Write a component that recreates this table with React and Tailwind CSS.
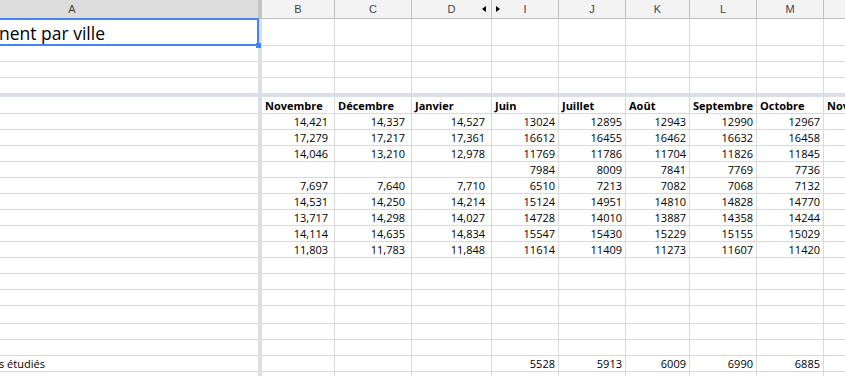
import React from "react";

const cols = [
  { k: "B", w: "w-[73px]", pr: "pr-[6px]" },
  { k: "C", w: "w-[77px]", pr: "pr-[6px]" },
  { k: "D", w: "w-[80px]", pr: "pr-[6px]" },
  { k: "I", w: "w-[67px]", pr: "pr-[3px]" },
  { k: "J", w: "w-[67px]", pr: "pr-[3px]" },
  { k: "K", w: "w-[64px]", pr: "pr-[3px]" },
  { k: "L", w: "w-[67px]", pr: "pr-[3px]" },
  { k: "M", w: "w-[67px]", pr: "pr-[3px]" },
  { k: "N", w: "w-[80px]", pr: "pr-[3px]" },
];

const months = ["Novembre", "Décembre", "Janvier", "Juin", "Juillet", "Août", "Septembre", "Octobre", "Novembre"];

const data = [
  ["14,421", "14,337", "14,527", "13024", "12895", "12943", "12990", "12967"],
  ["17,279", "17,217", "17,361", "16612", "16455", "16462", "16632", "16458"],
  ["14,046", "13,210", "12,978", "11769", "11786", "11704", "11826", "11845"],
  ["", "", "", "7984", "8009", "7841", "7769", "7736"],
  ["7,697", "7,640", "7,710", "6510", "7213", "7082", "7068", "7132"],
  ["14,531", "14,250", "14,214", "15124", "14951", "14810", "14828", "14770"],
  ["13,717", "14,298", "14,027", "14728", "14010", "13887", "14358", "14244"],
  ["14,114", "14,635", "14,834", "15547", "15430", "15229", "15155", "15029"],
  ["11,803", "11,783", "11,848", "11614", "11409", "11273", "11607", "11420"],
];

const blank = [];

// bottom pane rows: [height class, label in A, values]
const bottomRows = [
  ...data.map((d) => ["h-[16px]", "", d]),
  ["h-[16px]", "", blank],
  ["h-[16px]", "", blank],
  ["h-[16px]", "", blank],
  ["h-[18px]", "", blank],
  ["h-[16px]", "", blank],
  ["h-[16px]", "", blank],
  ["h-[16px]", "s étudiés", ["", "", "", "5528", "5913", "6009", "6990", "6885"]],
  ["h-[16px]", "", blank],
];

const topRows = ["h-[27px]", "h-[16px]", "h-[16px]", "h-[15px]"];

function Tri({ dir }) {
  return (
    <svg width="4" height="6" viewBox="0 0 4 6" className="block">
      {dir === "left" ? <path d="M4 0 L0 3 L4 6 Z" fill="#000" /> : <path d="M0 0 L4 3 L0 6 Z" fill="#000" />}
    </svg>
  );
}

export default function App() {
  return (
    <div className="w-[845px] h-[376px] overflow-hidden bg-white text-black font-['Open_Sans',sans-serif]">
      {/* frozen top */}
      <div className="flex">
        {/* column A */}
        <div className="w-[258px] flex flex-col shrink-0">
          <div className="h-[19px] bg-[#dcdcdc] border-b border-[#c0c0c0] overflow-hidden">
            <div className="w-[372px] ml-[-114px] h-full flex items-center justify-center text-[11px] text-[#444] font-['Liberation_Sans',sans-serif]">
              A
            </div>
          </div>
          <div className="h-[27px] relative border-b border-[#dadada] flex items-end">
            <span className="text-[17.5px] leading-[24px] ml-[-1px] whitespace-nowrap">nent par ville</span>
            <div className="absolute left-[-3px] right-[-1px] top-[-1px] bottom-[-1px] border-2 border-[#4285f4]" />
            <div className="absolute right-[-3px] bottom-[-3px] w-[5px] h-[5px] bg-[#4285f4] z-10" />
          </div>
          <div className="h-[16px] border-b border-[#dadada]" />
          <div className="h-[16px] border-b border-[#dadada]" />
          <div className="h-[15px]" />
        </div>
        {/* vertical divider */}
        <div className="w-[4px] shrink-0 flex flex-col">
          <div className="h-[19px] bg-[#c4c4c4]" />
          <div className="flex-1 bg-[#dadfe8]" />
        </div>
        {/* right pane */}
        <div className="flex flex-col">
          <div className="flex h-[19px]">
            {cols.map((c) => (
              <div
                key={c.k}
                className={`${c.w} shrink-0 relative bg-[#f3f3f3] border-r border-b border-[#c0c0c0] flex items-center justify-center text-[11px] text-[#444] font-['Liberation_Sans',sans-serif]`}
              >
                {c.k === "N" ? "" : c.k}
                {c.k === "D" && (
                  <div className="absolute right-[5px] top-[6px]">
                    <Tri dir="left" />
                  </div>
                )}
                {c.k === "I" && (
                  <div className="absolute left-[4px] top-[6px]">
                    <Tri dir="right" />
                  </div>
                )}
              </div>
            ))}
          </div>
          {topRows.map((h, i) => (
            <div key={i} className={`flex ${h}`}>
              {cols.map((c) => (
                <div
                  key={c.k}
                  className={`${c.w} shrink-0 border-r border-[#dadada] ${i < 3 ? "border-b" : ""}`}
                />
              ))}
            </div>
          ))}
        </div>
      </div>

      {/* horizontal divider */}
      <div className="h-[4px] bg-[#dadfe8]" />

      {/* scrolling area */}
      <div className="flex text-[11px] leading-[15px]">
        <div className="w-[258px] shrink-0 flex flex-col">
          <div className="h-[17px] border-b border-[#dadada]" />
          {bottomRows.map(([h, label], i) => (
            <div key={i} className={`${h} border-b border-[#dadada] flex items-end overflow-hidden`}>
              <span className="ml-[-1px] whitespace-nowrap">{label}</span>
            </div>
          ))}
        </div>
        <div className="w-[4px] shrink-0 bg-[#dadfe8]" />
        <div className="flex flex-col">
          <div className="flex h-[17px]">
            {cols.map((c, j) => (
              <div
                key={c.k}
                className={`${c.w} shrink-0 border-r border-b border-[#dadada] pl-[3px] font-bold flex items-end overflow-hidden whitespace-nowrap`}
              >
                {months[j]}
              </div>
            ))}
          </div>
          {bottomRows.map(([h, , vals], i) => (
            <div key={i} className={`flex ${h}`}>
              {cols.map((c, j) => (
                <div
                  key={c.k}
                  className={`${c.w} shrink-0 border-r border-b border-[#dadada] ${c.pr} flex items-end justify-end`}
                >
                  {vals[j] || ""}
                </div>
              ))}
            </div>
          ))}
        </div>
      </div>
    </div>
  );
}
